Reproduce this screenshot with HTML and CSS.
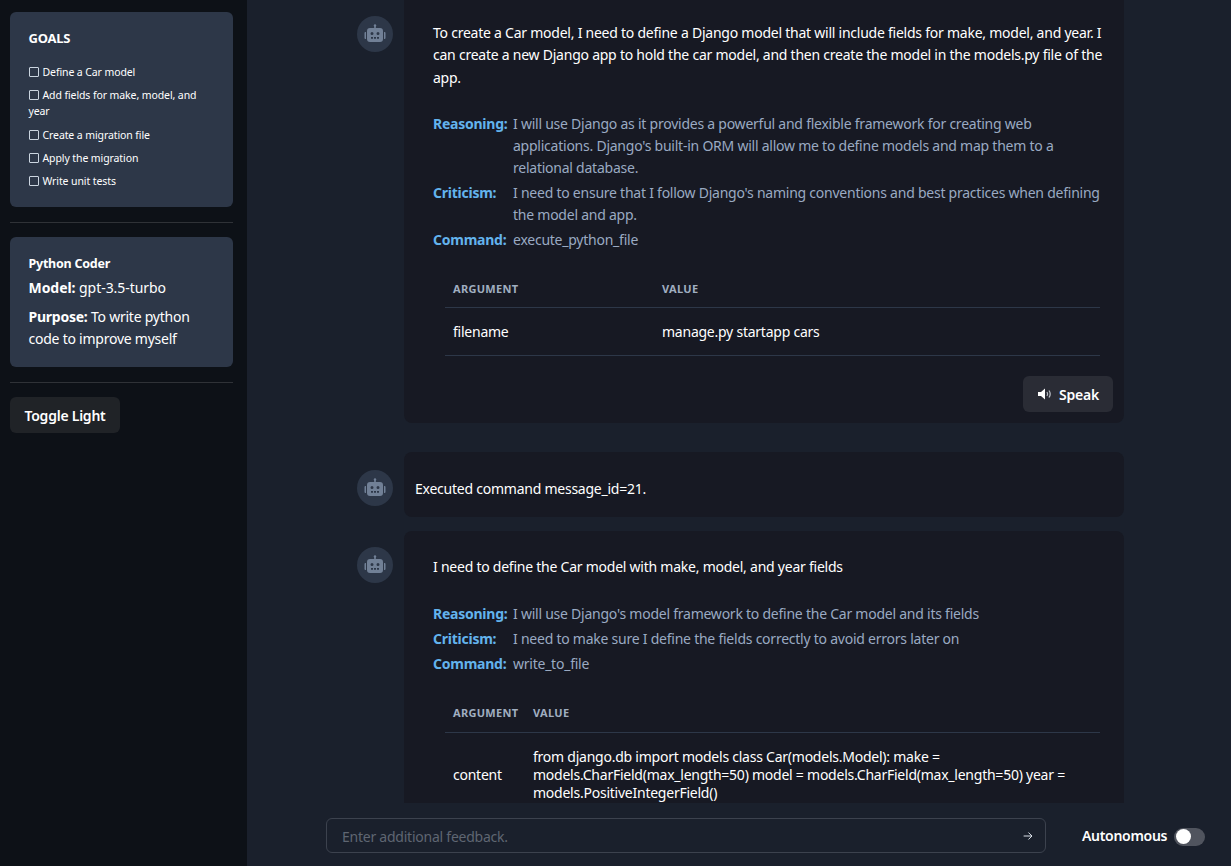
FILE: index.html
```html
<!DOCTYPE html>
<html lang="en">
<head>
    <meta charset="UTF-8">
    <meta name="viewport" content="width=device-width, initial-scale=1.0">
    <title>Agent Chat</title>
    <link rel="stylesheet" href="styles.css">
</head>
<body>

    <!-- Sidebar -->
    <aside class="sidebar">
        <div class="panel goals">
            <h2>GOALS</h2>
            <ul>
                <li><span class="box"></span>Define a Car model</li>
                <li><span class="box"></span>Add fields for make, model, and year</li>
                <li><span class="box"></span>Create a migration file</li>
                <li><span class="box"></span>Apply the migration</li>
                <li><span class="box"></span>Write unit tests</li>
            </ul>
        </div>
        <hr>
        <div class="panel agent">
            <h3>Python Coder</h3>
            <p class="agent-model"><b>Model:</b> gpt-3.5-turbo</p>
            <p><b>Purpose:</b> To write python code to improve myself</p>
        </div>
        <hr>
        <button class="toggle-light">Toggle Light</button>
    </aside>

    <main class="main">
        <section class="chat">

            <div class="message first">
                <div class="avatar">
                    <svg viewBox="0 0 24 24"><use href="#robot"></use></svg>
                </div>
                <div class="card">
                    <p class="thought">To create a Car model, I need to define a Django model that will include fields for make, model, and year. I can create a new Django app to hold the car model, and then create the model in the models.py file of the app.</p>
                    <dl class="details">
                        <dt>Reasoning:</dt>
                        <dd>I will use Django as it provides a powerful and flexible framework for creating web applications. Django's built-in ORM will allow me to define models and map them to a relational database.</dd>
                        <dt>Criticism:</dt>
                        <dd>I need to ensure that I follow Django's naming conventions and best practices when defining the model and app.</dd>
                        <dt>Command:</dt>
                        <dd>execute_python_file</dd>
                    </dl>
                    <table class="args args-wide">
                        <thead>
                            <tr><th>Argument</th><th>Value</th></tr>
                        </thead>
                        <tbody>
                            <tr><td>filename</td><td>manage.py startapp cars</td></tr>
                        </tbody>
                    </table>
                    <div class="card-actions">
                        <button class="speak">
                            <svg viewBox="0 0 16 16">
                                <path class="cone" d="M1 6h3l4-3.5v11L4 10H1z"></path>
                                <path class="wave" d="M10 6c.8 1.2.8 2.800 0 4M12 4.500c1.500 2.200 1.500 4.800 0 7"></path>
                            </svg>
                            <span class="speak-label">Speak</span>
                        </button>
                    </div>
                </div>
            </div>

            <div class="message second">
                <div class="avatar">
                    <svg viewBox="0 0 24 24"><use href="#robot"></use></svg>
                </div>
                <div class="card card-small">Executed command message_id=21.</div>
            </div>

            <div class="message">
                <div class="avatar">
                    <svg viewBox="0 0 24 24"><use href="#robot"></use></svg>
                </div>
                <div class="card card-last">
                    <p class="thought">I need to define the Car model with make, model, and year fields</p>
                    <dl class="details">
                        <dt>Reasoning:</dt>
                        <dd>I will use Django's model framework to define the Car model and its fields</dd>
                        <dt>Criticism:</dt>
                        <dd>I need to make sure I define the fields correctly to avoid errors later on</dd>
                        <dt>Command:</dt>
                        <dd>write_to_file</dd>
                    </dl>
                    <table class="args args-narrow">
                        <thead>
                            <tr><th>Argument</th><th>Value</th></tr>
                        </thead>
                        <tbody>
                            <tr><td>content</td><td>from django.db import models class Car(models.Model): make = models.CharField(max_length=50) model = models.CharField(max_length=50) year = models.PositiveIntegerField()</td></tr>
                        </tbody>
                    </table>
                </div>
            </div>

        </section>

        <!-- Feedback bar -->
        <footer class="feedback">
            <div class="feedback-input">
                <input type="text" placeholder="Enter additional feedback.">
                <svg viewBox="0 0 16 16"><path d="M3 8h9.500M8.500 4l4 4-4 4"></path></svg>
            </div>
            <div class="autonomous">
                <span>Autonomous</span>
                <span class="switch"><span class="knob"></span></span>
            </div>
        </footer>
    </main>

    <svg class="defs" width="0" height="0">
        <symbol id="robot" viewBox="0 0 24 24">
            <path d="M11.200 3.500h1.600V6h-1.600z"></path>
            <circle cx="12" cy="3.500" r="1.200"></circle>
            <path fill-rule="evenodd" d="M7 6h10a3 3 0 0 1 3 3v8a3 3 0 0 1-3 3H7a3 3 0 0 1-3-3V9a3 3 0 0 1 3-3zM9 10a1.500 1.500 0 1 0 0 3 1.500 1.500 0 0 0 0-3zm6 0a1.500 1.500 0 1 0 0 3 1.500 1.500 0 0 0 0-3zM8 15v1.700h2V15zm3 0v1.700h2V15zm3 0v1.700h2V15z"></path>
            <path d="M3 10H2.500A1 1 0 0 0 1.500 11v5a1 1 0 0 0 1 1H3zM21 10h.5a1 1 0 0 1 1 1v5a1 1 0 0 1-1 1H21z"></path>
        </symbol>
    </svg>

</body>
</html>
```

FILE: styles.css
```css
* {
    margin: 0;
    padding: 0;
    box-sizing: border-box;
}

body {
    font-family: "Noto Sans", "Open Sans", sans-serif;
    font-size: 14px;
    line-height: 22.4px;
    letter-spacing: -0.24px;
    background-color: #1a202c;
    color: #fff;
    display: flex;
    height: 100vh;
    overflow: hidden;
}

.defs {
    position: absolute;
}

/* Sidebar */
.sidebar {
    width: 247px;
    flex-shrink: 0;
    background-color: #0d1117;
    padding: 12px 14px 0 10px;
}

.sidebar hr {
    border: none;
    border-top: 1px solid #2f3237;
    margin: 15px 0 14px;
}

.panel {
    background-color: #2d3748;
    border-radius: 6px;
    padding: 18px 18px 18px 18.500px;
}

.goals {
    height: 195px;
}

.goals h2 {
    font-size: 13px;
    line-height: 16px;
    font-weight: 700;
    margin-bottom: 18px;
}

.goals ul {
    list-style-type: none;
}

.goals li {
    font-size: 10.500px;
    line-height: 16px;
    letter-spacing: -0.1px;
    margin-bottom: 7.300px;
}

.box {
    display: inline-block;
    width: 10px;
    height: 10px;
    border: 1px solid #cbd5e0;
    border-radius: 1px;
    margin-right: 4px;
    vertical-align: -1px;
}

.agent {
    height: 130px;
    padding-top: 17px;
}

.agent h3 {
    font-size: 12.500px;
    line-height: 20px;
    font-weight: 700;
}

.agent p {
    font-size: 14px;
    line-height: 22px;
}

.agent-model {
    margin: 3px 0 7px;
    letter-spacing: -0.05px;
}

.toggle-light {
    font-family: inherit;
    font-size: 14px;
    font-weight: 600;
    letter-spacing: inherit;
    color: #fff;
    background-color: #202327;
    border: none;
    border-radius: 6px;
    width: 110px;
    height: 36px;
}

/* Main column */
.main {
    flex: 1;
    min-width: 0;
    display: flex;
    flex-direction: column;
}

.chat {
    flex: 1;
    min-height: 0;
    overflow: hidden;
    padding-left: 110px;
}

.message {
    display: flex;
    gap: 11px;
    margin-bottom: 14px;
}

.message.first {
    margin-bottom: 29px;
}

.avatar {
    width: 36px;
    height: 36px;
    margin-top: 16px;
    flex-shrink: 0;
    border-radius: 50%;
    background-color: #2d3748;
    display: flex;
    align-items: center;
    justify-content: center;
}

.second .avatar {
    margin-top: 18px;
}

.avatar svg {
    width: 24px;
    height: 24px;
    fill: #718096;
}

.card {
    width: 720px;
    background-color: #171923;
    border-radius: 8px;
    padding: 22px 11px 11px 29px;
}

.first .card {
    border-radius: 0 0 8px 8px;
}

.card-small {
    padding: 26px 11px 17px;
    height: 65px;
}

.card-last {
    padding-top: 25px;
}

.details {
    display: grid;
    grid-template-columns: 80px 1fr;
    row-gap: 3px;
    margin-top: 24px;
    padding-right: 8px;
    line-height: 22px;
}

.card-last .details {
    margin-top: 25px;
}

.details dt {
    color: #63b3ed;
    font-weight: 700;
}

.details dd {
    color: #9aaac2;
}

/* Arguments table */
.args {
    border-collapse: collapse;
    width: 655px;
    margin: 27px 0 0 12px;
    table-layout: fixed;
}

.args th {
    font-size: 11px;
    font-weight: 700;
    letter-spacing: 0.3px;
    text-transform: uppercase;
    text-align: left;
    color: #a0aec0;
    padding: 0 8px 6px;
    border-bottom: 1px solid #2d3748;
}

.args-narrow th {
    padding-bottom: 8px;
}

.args td {
    padding: 15px 8px 14px;
    border-bottom: 1px solid #2d3748;
    line-height: 18px;
}

.args-wide th:first-child {
    width: 209px;
}

.args-narrow th:first-child {
    width: 80px;
}

.card-actions {
    display: flex;
    justify-content: flex-end;
    margin-top: 20px;
}

.speak {
    font-family: inherit;
    font-size: 14px;
    font-weight: 600;
    letter-spacing: inherit;
    color: #fff;
    background-color: #2a2c35;
    border: none;
    border-radius: 6px;
    width: 90px;
    height: 36px;
    display: flex;
    align-items: center;
    justify-content: center;
    gap: 6px;
}

.speak svg {
    width: 16px;
    height: 16px;
}

.speak-label {
    padding-top: 2px;
}

.cone {
    fill: #fff;
}

.wave {
    fill: none;
    stroke: #b8bcc4;
    stroke-width: 1.300;
}

/* Feedback bar */
.feedback {
    height: 63px;
    flex-shrink: 0;
    background-color: #1a202c;
    display: flex;
    align-items: center;
    padding: 2px 26px 0 79px;
    gap: 36px;
}

.feedback-input {
    width: 720px;
    height: 35px;
    flex-shrink: 0;
    border: 1px solid #3c424e;
    border-radius: 6px;
    display: flex;
    align-items: center;
    padding: 0 10px 0 15px;
}

.feedback-input input {
    flex: 1;
    background: none;
    border: none;
    outline: none;
    color: #fff;
    font-family: inherit;
    font-size: 14px;
    letter-spacing: inherit;
    padding-top: 2px;
}

.feedback-input input::placeholder {
    color: #5f6672;
}

.feedback-input svg {
    width: 14px;
    height: 14px;
    fill: none;
    stroke: #e2e8f0;
    stroke-width: 1.100;
}

.autonomous {
    display: flex;
    align-items: center;
    gap: 7px;
    font-weight: 600;
    letter-spacing: -0.3px;
    padding-top: 2px;
}

.switch {
    width: 31px;
    height: 18px;
    border-radius: 9px;
    background-color: #50545e;
    padding: 1.500px;
    display: block;
}

.knob {
    display: block;
    width: 15px;
    height: 15px;
    border-radius: 50%;
    background-color: #fff;
}
```
